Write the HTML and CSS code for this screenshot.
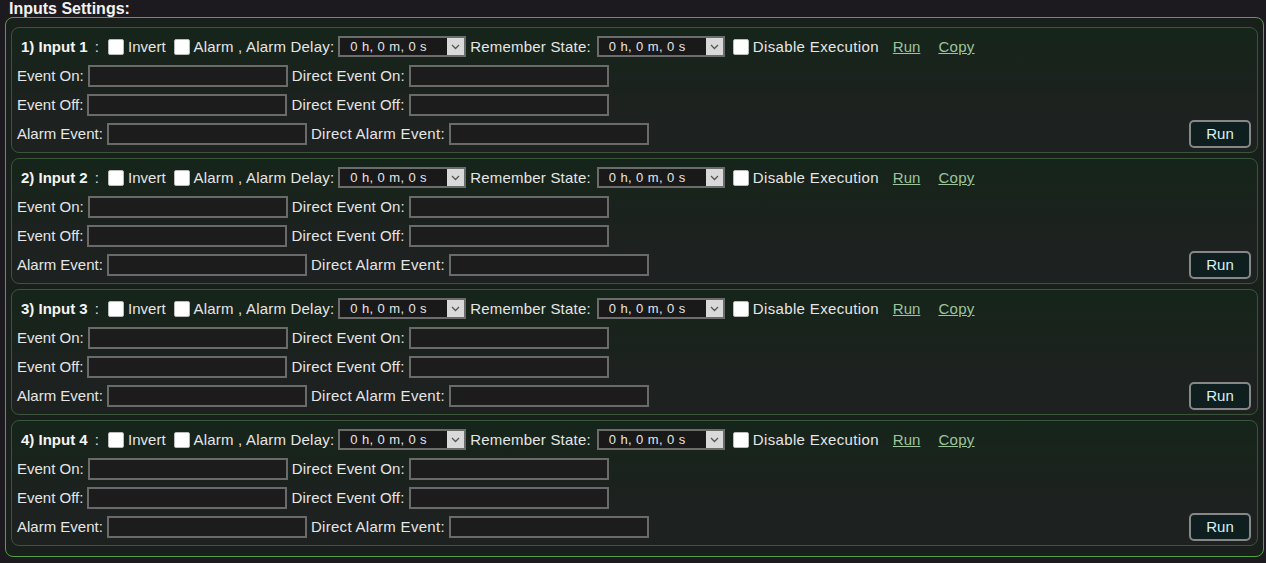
FILE: index.html
```html
<!DOCTYPE html>
<html>
<head>
  <title>Inputs Settings</title>
  <link rel="stylesheet" href="styles.css">
</head>
<body>
  <div class="title">Inputs Settings:</div>

  <div class="settings">
    <div class="card">
      <div class="row head">
        <b class="name">1) Input 1</b><span class="colon">:</span>
        <input type="checkbox" class="chk"><span class="plain">Invert</span>
        <input type="checkbox" class="chk gap"><span>Alarm , Alarm Delay:</span>
        <span class="sel"><select><option>0 h, 0 m, 0 s</option></select><span class="arrow"><svg width="9" height="6" viewBox="0 0 9 6"><path d="M1 1l3.5 3.5L8 1" fill="none" stroke="#555" stroke-width="1.3"/></svg></span></span>
        <span>Remember State:</span>
        <span class="sel"><select><option>0 h, 0 m, 0 s</option></select><span class="arrow"><svg width="9" height="6" viewBox="0 0 9 6"><path d="M1 1l3.5 3.5L8 1" fill="none" stroke="#555" stroke-width="1.3"/></svg></span></span>
        <input type="checkbox" class="chk gap"><span class="wide">Disable Execution</span>
        <a href="#" class="link">Run</a><a href="#" class="link">Copy</a>
      </div>
      <div class="row"><span>Event On:</span><input type="text" class="txt"><span class="direct">Direct Event On:</span><input type="text" class="txt"></div>
      <div class="row"><span>Event Off:</span><input type="text" class="txt"><span class="direct">Direct Event Off:</span><input type="text" class="txt"></div>
      <div class="row"><span>Alarm Event:</span><input type="text" class="txt"><span class="direct alarm">Direct Alarm Event:</span><input type="text" class="txt"><button class="run">Run</button></div>
    </div>

    <div class="card">
      <div class="row head">
        <b class="name">2) Input 2</b><span class="colon">:</span>
        <input type="checkbox" class="chk"><span class="plain">Invert</span>
        <input type="checkbox" class="chk gap"><span>Alarm , Alarm Delay:</span>
        <span class="sel"><select><option>0 h, 0 m, 0 s</option></select><span class="arrow"><svg width="9" height="6" viewBox="0 0 9 6"><path d="M1 1l3.5 3.5L8 1" fill="none" stroke="#555" stroke-width="1.3"/></svg></span></span>
        <span>Remember State:</span>
        <span class="sel"><select><option>0 h, 0 m, 0 s</option></select><span class="arrow"><svg width="9" height="6" viewBox="0 0 9 6"><path d="M1 1l3.5 3.5L8 1" fill="none" stroke="#555" stroke-width="1.3"/></svg></span></span>
        <input type="checkbox" class="chk gap"><span class="wide">Disable Execution</span>
        <a href="#" class="link">Run</a><a href="#" class="link">Copy</a>
      </div>
      <div class="row"><span>Event On:</span><input type="text" class="txt"><span class="direct">Direct Event On:</span><input type="text" class="txt"></div>
      <div class="row"><span>Event Off:</span><input type="text" class="txt"><span class="direct">Direct Event Off:</span><input type="text" class="txt"></div>
      <div class="row"><span>Alarm Event:</span><input type="text" class="txt"><span class="direct alarm">Direct Alarm Event:</span><input type="text" class="txt"><button class="run">Run</button></div>
    </div>

    <div class="card">
      <div class="row head">
        <b class="name">3) Input 3</b><span class="colon">:</span>
        <input type="checkbox" class="chk"><span class="plain">Invert</span>
        <input type="checkbox" class="chk gap"><span>Alarm , Alarm Delay:</span>
        <span class="sel"><select><option>0 h, 0 m, 0 s</option></select><span class="arrow"><svg width="9" height="6" viewBox="0 0 9 6"><path d="M1 1l3.5 3.5L8 1" fill="none" stroke="#555" stroke-width="1.3"/></svg></span></span>
        <span>Remember State:</span>
        <span class="sel"><select><option>0 h, 0 m, 0 s</option></select><span class="arrow"><svg width="9" height="6" viewBox="0 0 9 6"><path d="M1 1l3.5 3.5L8 1" fill="none" stroke="#555" stroke-width="1.3"/></svg></span></span>
        <input type="checkbox" class="chk gap"><span class="wide">Disable Execution</span>
        <a href="#" class="link">Run</a><a href="#" class="link">Copy</a>
      </div>
      <div class="row"><span>Event On:</span><input type="text" class="txt"><span class="direct">Direct Event On:</span><input type="text" class="txt"></div>
      <div class="row"><span>Event Off:</span><input type="text" class="txt"><span class="direct">Direct Event Off:</span><input type="text" class="txt"></div>
      <div class="row"><span>Alarm Event:</span><input type="text" class="txt"><span class="direct alarm">Direct Alarm Event:</span><input type="text" class="txt"><button class="run">Run</button></div>
    </div>

    <div class="card">
      <div class="row head">
        <b class="name">4) Input 4</b><span class="colon">:</span>
        <input type="checkbox" class="chk"><span class="plain">Invert</span>
        <input type="checkbox" class="chk gap"><span>Alarm , Alarm Delay:</span>
        <span class="sel"><select><option>0 h, 0 m, 0 s</option></select><span class="arrow"><svg width="9" height="6" viewBox="0 0 9 6"><path d="M1 1l3.5 3.5L8 1" fill="none" stroke="#555" stroke-width="1.3"/></svg></span></span>
        <span>Remember State:</span>
        <span class="sel"><select><option>0 h, 0 m, 0 s</option></select><span class="arrow"><svg width="9" height="6" viewBox="0 0 9 6"><path d="M1 1l3.5 3.5L8 1" fill="none" stroke="#555" stroke-width="1.3"/></svg></span></span>
        <input type="checkbox" class="chk gap"><span class="wide">Disable Execution</span>
        <a href="#" class="link">Run</a><a href="#" class="link">Copy</a>
      </div>
      <div class="row"><span>Event On:</span><input type="text" class="txt"><span class="direct">Direct Event On:</span><input type="text" class="txt"></div>
      <div class="row"><span>Event Off:</span><input type="text" class="txt"><span class="direct">Direct Event Off:</span><input type="text" class="txt"></div>
      <div class="row"><span>Alarm Event:</span><input type="text" class="txt"><span class="direct alarm">Direct Alarm Event:</span><input type="text" class="txt"><button class="run">Run</button></div>
    </div>
  </div>
</body>
</html>
```

FILE: styles.css
```css
body {
  margin: 0 2px 0 5px;
  background: #1d1a1f;
  color: #e6e6e6;
  font-family: "Liberation Sans", Arial, sans-serif;
  font-size: 15px;
}
.title {
  height: 17px;
  line-height: 17px;
  padding-left: 4px;
  font-weight: bold;
  font-size: 16px;
  color: #f2f2f2;
}
.settings {
  border: 1px solid #56a044;
  border-radius: 8px;
  padding: 9px 5px 10px;
  background: #19201b;
  display: flex;
  flex-direction: column;
  gap: 5px;
}
.card {
  border: 1px solid #3a5539;
  border-radius: 8px;
  padding: 4px 5px;
  background: linear-gradient(#15251a, #1d211f 65%);
}
.row {
  height: 29px;
  display: flex;
  align-items: center;
  gap: 4px;
  white-space: nowrap;
}
.head span {
  letter-spacing: 0.2px;
}
.head .plain {
  letter-spacing: 0;
}
.head .wide {
  letter-spacing: 0.35px;
}
.name {
  margin-left: 4px;
  color: #f4f4f4;
}
.colon {
  margin-left: 3px;
  margin-right: 5px;
}
.chk {
  appearance: none;
  width: 16px;
  height: 16px;
  margin: 0;
  background: #fff;
  border: 1px solid #bbb;
  border-radius: 2px;
}
.chk.gap {
  margin-left: 4px;
}
.sel {
  position: relative;
  display: inline-block;
  height: 21px;
}
.sel + span + .sel {
  margin-left: 2px;
}
.sel select {
  appearance: none;
  width: 128px;
  height: 21px;
  margin: 0;
  padding: 0 0 0 10px;
  background: #191919;
  color: #e6e6e6;
  border: 2px solid #6c6c6c;
  border-radius: 0;
  font-family: "Liberation Sans", Arial, sans-serif;
  font-size: 13px;
  letter-spacing: 0.4px;
}
.sel .arrow {
  position: absolute;
  right: 2px;
  top: 2px;
  width: 17px;
  height: 17px;
  background: #d9d9d9;
  display: flex;
  align-items: center;
  justify-content: center;
}
.link {
  color: #9cc59c;
  margin-left: 10px;
}
.link + .link {
  margin-left: 14px;
  letter-spacing: 0.3px;
}
.txt {
  width: 200px;
  height: 22px;
  box-sizing: border-box;
  margin: 0;
  background: #1c1c1c;
  border: 2px solid #6a6a6a;
  color: #e6e6e6;
}
.direct {
  letter-spacing: 0.2px;
}
.direct.alarm {
  letter-spacing: 0.3px;
}
.run {
  margin-left: auto;
  margin-right: 1px;
  width: 62px;
  height: 28px;
  background: #0f1f1f;
  border: 2px solid #878787;
  border-radius: 5px;
  color: #d8f0f0;
  font-family: "Liberation Sans", Arial, sans-serif;
  font-size: 15px;
}
```
